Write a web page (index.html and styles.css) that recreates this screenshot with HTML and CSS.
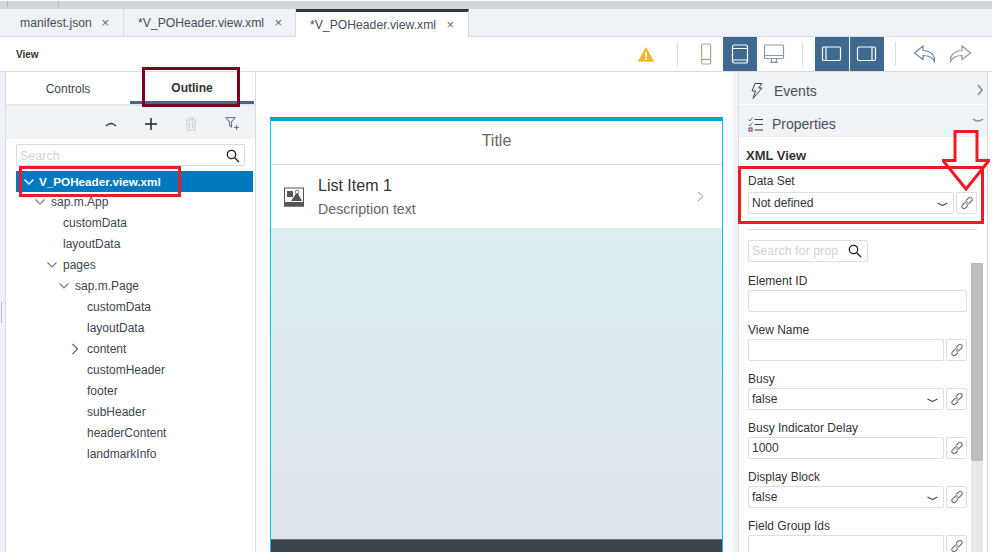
FILE: index.html
```html
<!DOCTYPE html>
<html lang="en">
<head>
<meta charset="utf-8">
<title>Layout Editor</title>
<link rel="stylesheet" href="styles.css">
</head>
<body>
<div class="app">
  <div class="topstrip"><div class="tick tick-a"></div><div class="tick tick-b"></div></div>
  <div class="tabs">
    <div class="tab tab-a"><span>manifest.json</span><i>×</i></div>
    <div class="tab tab-b"><span>*V_POHeader.view.xml</span><i>×</i></div>
    <div class="tab tab-c active"><span>*V_POHeader.view.xml</span><i>×</i></div>
  </div>
  <div class="toolbar">
    <div class="view-title">View</div>
    <svg class="warn" width="16" height="15" viewBox="0 0 18 16"><path d="M9 .5 17.6 15.5H.4Z" fill="#f3b62a" stroke="#f3b62a" stroke-linejoin="round"/><rect x="8" y="5" width="2" height="6" fill="#fff"/><rect x="8" y="12" width="2" height="2" fill="#fff"/></svg>
    <div class="sep sep-1"></div>
    <div class="tbtn"><svg width="14" height="22" viewBox="0 0 14 22" fill="none" stroke="#8b99a8" stroke-width="1.2"><rect x="2.6" y="1" width="9" height="20" rx="1.5" stroke="#b5a48f"/><path d="M2.6 16.500h9"/></svg></div>
    <div class="tbtn on"><svg width="20" height="22" viewBox="0 0 20 22" fill="none" stroke="#fff" stroke-width="1.2"><rect x="2.500" y="2" width="15" height="18" rx="2"/><path d="M2.500 5.500h15M2.500 17h15"/></svg></div>
    <div class="tbtn"><svg width="24" height="24" viewBox="0 0 24 24" fill="none" stroke="#8b99a8" stroke-width="1.2"><rect x="2.500" y="3" width="19" height="13.500" rx="1"/><path d="M2.500 13.500h19M9.500 16.500v3.500h5v-3.500M8 20.500h8"/></svg></div>
    <div class="sep sep-2"></div>
    <div class="tbtn on"><svg width="22" height="18" viewBox="0 0 22 18" fill="none" stroke="#fff" stroke-width="1.2"><rect x="1.500" y="2" width="18" height="13.500" rx="1.500"/><path d="M5 2v13.500"/></svg></div>
    <div class="tbtn on gap"><svg width="22" height="18" viewBox="0 0 22 18" fill="none" stroke="#fff" stroke-width="1.2"><rect x="1.500" y="2" width="18" height="13.500" rx="1.500"/><path d="M16 2v13.500"/></svg></div>
    <div class="sep sep-3"></div>
    <svg class="undo" width="24" height="18" viewBox="0 0 24 18" fill="none" stroke="#6b8aa8" stroke-width="1.200"><path d="M10 1 1.500 8 10 14.500v-4c5 0 9 1 11.500 6 .5-6-3-10.500-11.500-11Z"/></svg>
    <svg class="redo" width="24" height="18" viewBox="0 0 24 18" fill="none" stroke="#8b99a8" stroke-width="1.200"><path d="M14 1 22.500 8 14 14.500v-4c-5 0-9 1-11.500 6-.5-6 3-10.500 11.500-11Z"/></svg>
  </div>
  <div class="main">
    <div class="gutter"><div class="grip"></div></div>
    <aside class="left">
      <div class="lefttabs">
        <div class="ltab">Controls</div>
        <div class="ltab sel">Outline</div>
      </div>
      <div class="lefttools">
        <svg width="12" height="8" viewBox="0 0 12 8" fill="none" stroke="#333" stroke-width="1.200"><path d="M1 6 Q6 1 11 6"/></svg>
        <svg class="t-plus" width="14" height="14" viewBox="0 0 14 14" stroke="#222" stroke-width="1.500"><path d="M7 1v12M1 7h12"/></svg>
        <svg class="t-bin" width="12" height="14" viewBox="0 0 12 14" fill="none" stroke="#c9cdd2" stroke-width="1.100"><path d="M.5 3h11M4 3V1h4v2M2 3v10h8V3M4.500 5v6M7.500 5v6"/></svg>
        <svg class="t-filter" width="15" height="15" viewBox="0 0 15 15" fill="none" stroke="#6b7a89" stroke-width="1.100"><path d="M1 1.500h9L6.500 6v5L4.500 9.500V6ZM11.500 9v5M9 11.500h5"/></svg>
      </div>
      <div class="tree">
        <div class="search"><span>Search</span><svg width="14" height="14" viewBox="0 0 14 14" fill="none" stroke="#222" stroke-width="1.300"><circle cx="5.500" cy="5.500" r="4.200"/><path d="M8.700 8.700 13 13"/></svg></div>
        <div class="node root"><svg class="chev" width="12" height="8" viewBox="0 0 12 8" fill="none" stroke="#fff" stroke-width="1.300"><path d="M1.500 1.500 6 6l4.500-4.500"/></svg>V_POHeader.view.xml</div>
        <div class="node l1"><svg class="chev" width="12" height="8" viewBox="0 0 12 8" fill="none" stroke="#6b7a89" stroke-width="1.100"><path d="M1.500 1.500 6 6l4.500-4.500"/></svg>sap.m.App</div>
        <div class="node l2">customData</div>
        <div class="node l2">layoutData</div>
        <div class="node l1b"><svg class="chev" width="12" height="8" viewBox="0 0 12 8" fill="none" stroke="#6b7a89" stroke-width="1.100"><path d="M1.500 1.500 6 6l4.500-4.500"/></svg>pages</div>
        <div class="node l2b"><svg class="chev" width="12" height="8" viewBox="0 0 12 8" fill="none" stroke="#6b7a89" stroke-width="1.100"><path d="M1.500 1.500 6 6l4.500-4.500"/></svg>sap.m.Page</div>
        <div class="node l3">customData</div>
        <div class="node l3">layoutData</div>
        <div class="node l3c"><svg class="chev" width="8" height="12" viewBox="0 0 8 12" fill="none" stroke="#5a6875" stroke-width="1.200"><path d="M1.500 1 6.500 6l-5 5"/></svg>content</div>
        <div class="node l3">customHeader</div>
        <div class="node l3">footer</div>
        <div class="node l3">subHeader</div>
        <div class="node l3">headerContent</div>
        <div class="node l3">landmarkInfo</div>
      </div>
    </aside>
    <section class="canvas">
      <div class="phone">
        <div class="ph-title">Title</div>
        <div class="ph-item">
          <svg class="ph-img" width="20" height="20" viewBox="0 0 20 20"><rect x="0.500" y="1" width="19" height="18" fill="#fff" stroke="#555"/><rect x="0" y="15" width="20" height="4.500" fill="#555"/><rect x="3" y="4" width="6" height="6" fill="#555"/><path d="M7 14 13 5l5 9Z" fill="#555"/><circle cx="13" cy="5" r="1.800" fill="#fff" stroke="#555" stroke-width=".8"/></svg>
          <div class="ph-text">
            <div class="ph-head">List Item 1</div>
            <div class="ph-desc">Description text</div>
          </div>
          <svg class="ph-arrow" width="7" height="11" viewBox="0 0 7 11" fill="none" stroke="#8a8f94" stroke-width="1"><path d="M1 1l5 4.500-5 4.500"/></svg>
        </div>
        <div class="ph-body"></div>
        <div class="ph-foot"></div>
      </div>
    </section>
    <div class="splitter"></div>
    <aside class="right">
      <div class="acc acc-ev">
        <svg width="14" height="16" viewBox="0 0 14 16" fill="none" stroke="#444" stroke-width="1"><path d="M5 .5h7L8.500 5H12L3 15.500 5.500 8H2ZM5 .5"/></svg>
        <span>Events</span>
        <svg class="acc-arrow" width="6" height="12" viewBox="0 0 6 12" fill="none" stroke="#8a929b" stroke-width="1.600"><path d="M1 1l4 5-4 5"/></svg>
      </div>
      <div class="acc acc-pr">
        <svg width="16" height="15" viewBox="0 0 16 15" fill="none" stroke="#444" stroke-width="1"><path d="M6.500 2.500h8.500M6.500 7.500h8.500M6.500 13h8.500"/><path d="M.5 2.500l1.500 1.500L4.500.5M.5 7.500 2 9l2.500-3.500" stroke="#777"/><rect x="1" y="11" width="3" height="3" stroke="#7a2b6b"/></svg>
        <span>Properties</span>
        <svg class="acc-arrow2" width="12" height="6" viewBox="0 0 12 6" fill="none" stroke="#8a929b" stroke-width="1.600"><path d="M1 1q5 4 10 0"/></svg>
      </div>
      <div class="props">
        <h2>XML View</h2>
        <label class="first">Data Set</label>
        <div class="row">
          <div class="ctl grow"><span>Not defined</span><svg class="drop" width="11" height="5" viewBox="0 0 11 5" fill="none" stroke="#555" stroke-width="1.300"><path d="M.5 1l5 2.500 5-2.500"/></svg></div>
          <div class="link"><svg width="14" height="14" viewBox="0 0 14 14" fill="none" stroke="#6b7a89" stroke-width="1.100"><path d="M6 4.500 8.500 2a2 2 0 0 1 3 3L9 7.500a2 2 0 0 1-3 0M8 9.500 5.500 12a2 2 0 0 1-3-3L5 6.500a2 2 0 0 1 3 0"/></svg></div>
        </div>
        <div class="rule"></div>
        <div class="psearch"><span>Search for prop</span><svg width="14" height="14" viewBox="0 0 14 14" fill="none" stroke="#222" stroke-width="1.300"><circle cx="5.500" cy="5.500" r="4.200"/><path d="M8.700 8.700 13 13"/></svg></div>
      </div>
      <div class="scrollarea">
        <div class="fields">
          <div class="field"><label>Element ID</label><div class="row"><div class="ctl grow"></div></div></div>
          <div class="field"><label>View Name</label><div class="row"><div class="ctl grow"></div><div class="link"><svg width="14" height="14" viewBox="0 0 14 14" fill="none" stroke="#6b7a89" stroke-width="1.100"><path d="M6 4.500 8.500 2a2 2 0 0 1 3 3L9 7.500a2 2 0 0 1-3 0M8 9.500 5.500 12a2 2 0 0 1-3-3L5 6.500a2 2 0 0 1 3 0"/></svg></div></div></div>
          <div class="field"><label>Busy</label><div class="row"><div class="ctl grow"><span>false</span><svg class="drop" width="11" height="5" viewBox="0 0 11 5" fill="none" stroke="#555" stroke-width="1.300"><path d="M.5 1l5 2.500 5-2.500"/></svg></div><div class="link"><svg width="14" height="14" viewBox="0 0 14 14" fill="none" stroke="#6b7a89" stroke-width="1.100"><path d="M6 4.500 8.500 2a2 2 0 0 1 3 3L9 7.500a2 2 0 0 1-3 0M8 9.500 5.500 12a2 2 0 0 1-3-3L5 6.500a2 2 0 0 1 3 0"/></svg></div></div></div>
          <div class="field"><label>Busy Indicator Delay</label><div class="row"><div class="ctl grow"><span>1000</span></div><div class="link"><svg width="14" height="14" viewBox="0 0 14 14" fill="none" stroke="#6b7a89" stroke-width="1.100"><path d="M6 4.500 8.500 2a2 2 0 0 1 3 3L9 7.500a2 2 0 0 1-3 0M8 9.500 5.500 12a2 2 0 0 1-3-3L5 6.500a2 2 0 0 1 3 0"/></svg></div></div></div>
          <div class="field"><label>Display Block</label><div class="row"><div class="ctl grow"><span>false</span><svg class="drop" width="11" height="5" viewBox="0 0 11 5" fill="none" stroke="#555" stroke-width="1.300"><path d="M.5 1l5 2.500 5-2.500"/></svg></div><div class="link"><svg width="14" height="14" viewBox="0 0 14 14" fill="none" stroke="#6b7a89" stroke-width="1.100"><path d="M6 4.500 8.500 2a2 2 0 0 1 3 3L9 7.500a2 2 0 0 1-3 0M8 9.500 5.500 12a2 2 0 0 1-3-3L5 6.500a2 2 0 0 1 3 0"/></svg></div></div></div>
          <div class="field"><label>Field Group Ids</label><div class="row"><div class="ctl grow"></div><div class="link"><svg width="14" height="14" viewBox="0 0 14 14" fill="none" stroke="#6b7a89" stroke-width="1.100"><path d="M6 4.500 8.500 2a2 2 0 0 1 3 3L9 7.500a2 2 0 0 1-3 0M8 9.500 5.500 12a2 2 0 0 1-3-3L5 6.500a2 2 0 0 1 3 0"/></svg></div></div></div>
        </div>
        <div class="sbar"><div class="thumb"></div></div>
      </div>
    </aside>
  </div>
  <div class="mark mark-outline"></div>
  <div class="mark mark-root"></div>
  <div class="mark mark-data"></div>
  <svg class="mark-arrow" width="48" height="62" viewBox="0 0 48 62" fill="none" stroke="#ed1c24" stroke-width="3"><path d="M13 1.500h22v29h12L24 59 1 30.500h12Z"/></svg>
</div>
</body>
</html>
```
FILE: styles.css
```css
* { box-sizing: border-box; }
html, body { margin: 0; padding: 0; height: 552px; overflow: hidden; background: #fff; }
body { font-family: "Liberation Sans", Arial, sans-serif; color: #333; }
.app { position: relative; width: 992px; height: 552px; display: flex; flex-direction: column; overflow: hidden; }
.topstrip { height: 9px; flex: none; display: flex; background: #d3d7dc; border-top: 1px solid #fafafa; }
.tick { width: 1px; height: 6px; background: #b4b9bf; }
.tick-a { margin-left: 7px; }
.tick-b { margin-left: 50px; }
.tabs { height: 28px; flex: none; display: flex; padding-left: 6px; background: #eff2f7; border-bottom: 1px solid #d8dce3; font-size: 12.2px; color: #46505a; }
.tab { display: flex; align-items: center; justify-content: space-between; border-right: 1px solid #d8dce3; }
.tab i { font-style: normal; font-size: 13px; color: #5f6a75; }
.tab-a { width: 118px; padding: 0 14px 0 14px; }
.tab-b { width: 172px; padding: 0 13px 0 14px; }
.tab-c { width: 173px; padding: 0 14px 0 14px; }
.tab.active { background: #fff; border-top: 3px solid #2e3a46; margin-bottom: -1px; padding-top: 0; }
.toolbar { height: 35px; flex: none; display: flex; align-items: center; background: #fff; border-bottom: 1px solid #d8dce3; }
.view-title { font-size: 10px; font-weight: bold; margin-left: 16px; width: 622px; color: #333; }
.warn { flex: none; }
.sep { width: 1px; height: 24px; background: #d8dce3; flex: none; }
.sep-1 { margin-left: 23px; margin-right: 11px; }
.sep-2 { margin: 0 12px 0 11px; }
.sep-3 { margin: 0 17px 0 11px; }
.tbtn { width: 34px; height: 34px; flex: none; display: flex; align-items: center; justify-content: center; }
.tbtn.on { background: #3f6a8f; }
.tbtn.gap { margin-left: 1px; }
.undo { margin-right: 11px; flex: none; }
.redo { flex: none; }
.main { flex: 1; display: flex; min-height: 0; }
.gutter { width: 6px; flex: none; background: #eff2f7; border-right: 1px solid #d8dce3; display: flex; align-items: center; }
.grip { width: 1px; height: 21px; margin-left: 1px; background: #bcc1c7; }
.left { width: 250px; flex: none; display: flex; flex-direction: column; border-right: 1px solid #d8dce3; background: #fff; }
.lefttabs { height: 34px; flex: none; display: flex; padding-right: 1px; border-bottom: 2px solid #e3e6ea; font-size: 12px; }
.ltab { width: 124px; display: flex; align-items: center; justify-content: center; padding-top: 1px; color: #3c4650; }
.ltab.sel { font-weight: bold; border-bottom: 3px solid #3f6a8f; padding-top: 3px; color: #333; }
.lefttools { height: 33px; flex: none; background: #eff2f7; display: flex; align-items: center; padding: 2px 0 0 99px; }
.t-plus { margin-left: 27px; }
.t-bin { margin-left: 27px; }
.t-filter { margin-left: 28px; }
.tree { flex: 1; padding: 5px 0 0 10px; font-size: 12px; }
.search { width: 229px; height: 22px; border: 1px solid #d8dce3; border-radius: 2px; display: flex; align-items: center; justify-content: space-between; padding: 2px 4px 0 3px; font-size: 12.5px; color: #d0d4d8; }
.node { height: 21px; display: flex; align-items: center; color: #3c4650; white-space: nowrap; }
.chev { flex: none; margin-right: 5px; }
.root { margin: 5px 2px -1px 0; height: 21px; background: #0079c1; color: #fff; font-weight: bold; font-size: 11.7px; padding-left: 7px; }
.root .chev { margin-right: 4px; }
.l1 { padding-left: 18px; }
.l2 { padding-left: 47px; }
.l1b { padding-left: 30px; }
.l2b { padding-left: 42px; }
.l3 { padding-left: 71px; }
.l3c { padding-left: 55px; }
.l3c .chev { margin-right: 8px; }
.canvas { flex: 1; min-width: 0; padding: 45px 10px 0 14px; background: #fff; }
.phone { height: 100%; border: 1px solid #00c3ff; border-top: 4px solid #00a4e4; border-bottom: 0; display: flex; flex-direction: column; }
.ph-title { height: 44px; flex: none; border-bottom: 1px solid #dcdfe2; display: flex; align-items: center; justify-content: center; padding-bottom: 3px; font-size: 16px; color: #666; }
.ph-item { height: 64px; flex: none; display: flex; align-items: center; padding: 0 18px 0 13px; border-bottom: 1px solid #e0e4e6; }
.ph-img { flex: none; }
.ph-text { flex: 1; margin-left: 14px; }
.ph-head { font-size: 16px; color: #333; }
.ph-desc { font-size: 14.2px; color: #666; margin-top: 6px; }
.ph-arrow { flex: none; }
.ph-body { flex: 1; background: linear-gradient(#dceef1, #dde4ea); }
.ph-foot { height: 13px; flex: none; background: #3a444c; border-top: 1px solid #6b7277; }
.splitter { width: 5px; flex: none; background: #eff2f7; }
.right { width: 250px; flex: none; margin-right: 4px; display: flex; flex-direction: column; border-left: 1px solid #d8dce3; border-right: 1px solid #d8dce3; background: #fff; }
.acc { flex: none; background: #eff2f7; display: flex; align-items: center; font-size: 14px; color: #46505a; }
.acc-ev { height: 33px; padding: 6px 0 0 11px; border-bottom: 1px solid #fff; }
.acc-ev span { margin-left: 10px; }
.acc-pr { height: 32px; padding: 6px 0 0 9px; }
.acc-pr span { margin-left: 8px; }
.acc-arrow { margin-left: auto; margin-right: 4px; margin-top: -3px; }
.acc-arrow2 { margin-left: auto; margin-right: 3px; margin-top: -6px; }
.props { flex: none; padding: 11px 10px 0 9px; }
.props h2 { margin: 0 0 10px -2px; font-size: 13px; line-height: 15px; color: #333; }
.right label { display: block; font-size: 12px; line-height: 16px; height: 17px; color: #333; }
.right label.first { height: 16px; margin-bottom: 3px; }
.row { display: flex; gap: 2px; }
.ctl { height: 22px; border: 1px solid #dcdfe3; border-radius: 2px; display: flex; align-items: center; justify-content: space-between; padding: 0 5px 0 3px; font-size: 12px; color: #333; background: #fff; }
.grow { flex: 1; min-width: 0; }
.drop { flex: none; margin-left: auto; margin-top: 2px; }
.link { width: 21px; height: 22px; flex: none; border: 1px solid #dcdfe3; border-radius: 2px; display: flex; align-items: center; justify-content: center; }
.rule { height: 1px; background: #d8dce3; margin-top: 15px; }
.psearch { width: 120px; height: 22px; margin-top: 10px; border: 1px solid #dcdfe3; border-radius: 2px; display: flex; align-items: center; justify-content: space-between; padding: 0 5px 0 3px; font-size: 12.5px; color: #d0d4d8; white-space: nowrap; overflow: hidden; }
.psearch span { width: 86px; overflow: hidden; }
.psearch svg { flex: none; }
.scrollarea { flex: 1; min-height: 0; display: flex; margin-top: 1px; overflow: hidden; }
.fields { width: 232px; flex: none; padding: 10px 4px 0 9px; }
.field { height: 49px; }
.sbar { width: 12px; flex: none; background: #e8e8e8; }
.thumb { height: 198px; background: #bdbdbd; border-radius: 0 0 2px 2px; }
.mark { position: absolute; pointer-events: none; }
.mark-outline { left: 142px; top: 67px; width: 98px; height: 40px; border: 3px solid #7f0018; }
.mark-root { left: 19px; top: 166px; width: 162px; height: 31px; border: 3px solid #ed1c24; }
.mark-data { left: 738px; top: 166px; width: 246px; height: 58px; border: 3px solid #ed1c24; }
.mark-arrow { position: absolute; left: 942px; top: 130px; pointer-events: none; }
```
